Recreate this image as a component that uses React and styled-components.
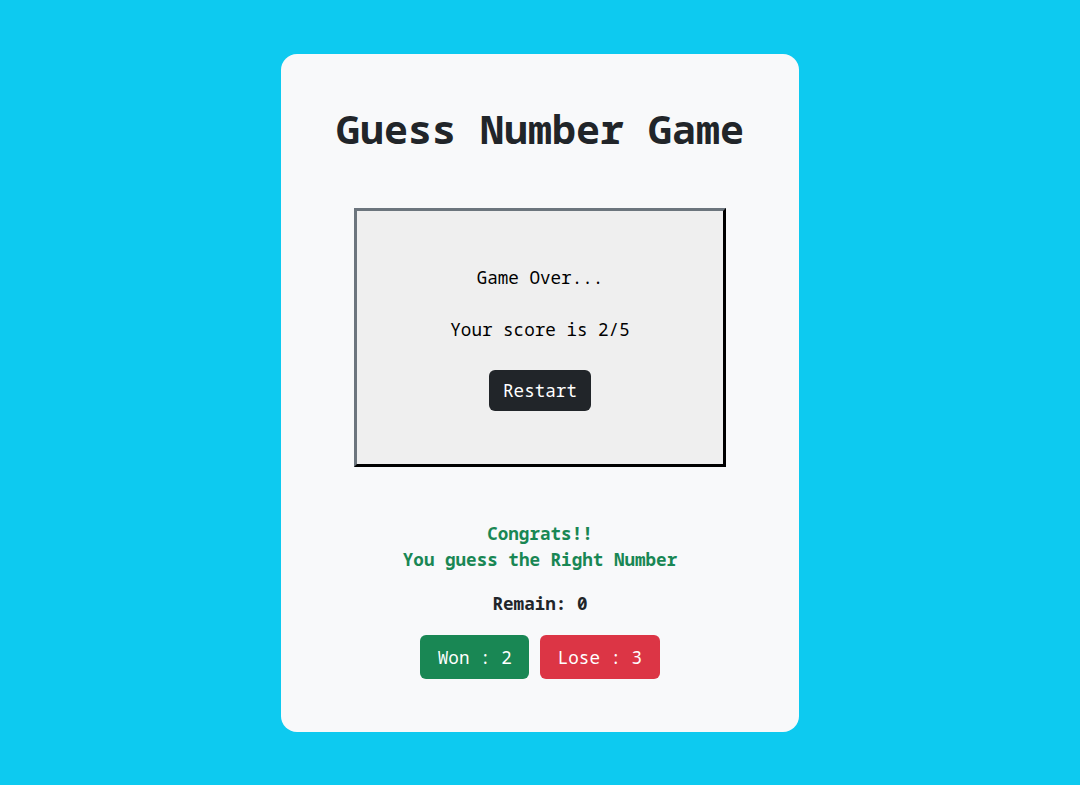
import styled, { createGlobalStyle } from 'styled-components'

const GlobalStyle = createGlobalStyle`
body {
  margin: 0;
  background-color: #0dcaf0;
  font-family: "Noto Sans Mono", "DejaVu Sans Mono", monospace;
  color: #212529;
}
`

const Page = styled.div`
min-height: 785px;
display: flex;
justify-content: center;
align-items: flex-start;
padding-top: 54px;
box-sizing: border-box;
`

const Card = styled.div`
width: 518px;
box-sizing: border-box;
background-color: #f8f9fa;
border-radius: 16px;
padding: 51px 0 53px;
display: flex;
flex-direction: column;
align-items: center;
`

const Title = styled.h1`
margin: 0 0 55px;
font-size: 40px;
line-height: 48px;
font-weight: 700;
color: #212529;
`

const Screen = styled.div`
width: 372px;
height: 259px;
box-sizing: border-box;
background-color: #efefef;
border-style: solid;
border-width: 3px;
border-color: #6c757d #000 #000 #6c757d;
padding: 53px 0;
display: flex;
flex-direction: column;
align-items: center;
`

const Line = styled.p`
margin: 0 0 ${p => p.$gap || 26}px;
font-size: 17.6px;
line-height: 26.4px;
color: #000;
`

const Button = styled.button`
font-family: inherit;
font-size: 17.6px;
line-height: 26.4px;
border: none;
border-radius: 6px;
color: #fff;
background-color: ${p => p.$bg};
padding: ${p => p.$pad};
cursor: pointer;
`

const Message = styled.div`
margin-top: 53px;
text-align: center;
font-size: 17.6px;
line-height: 26px;
font-weight: 700;
color: #198754;
`

const Remain = styled.div`
margin-top: 18px;
font-size: 17.6px;
line-height: 26px;
font-weight: 700;
color: #212529;
`

const Stats = styled.div`
margin-top: 19px;
display: flex;
gap: 11px;
`

const App = () => {
    return (
        <>
            <GlobalStyle />
            <Page>
                <Card>
                    <Title>Guess Number Game</Title>
                    <Screen>
                        <Line>Game Over...</Line>
                        <Line $gap={27}>Your score is 2/5</Line>
                        <Button $bg="#212529" $pad="7.3px 14px">Restart</Button>
                    </Screen>
                    <Message>
                        Congrats!!<br />
                        You guess the Right Number
                    </Message>
                    <Remain>Remain: 0</Remain>
                    <Stats>
                        <Button $bg="#198754" $pad="9px 17.5px">Won : 2</Button>
                        <Button $bg="#dc3545" $pad="9px 17.5px">Lose : 3</Button>
                    </Stats>
                </Card>
            </Page>
        </>
    )
}

export default App
